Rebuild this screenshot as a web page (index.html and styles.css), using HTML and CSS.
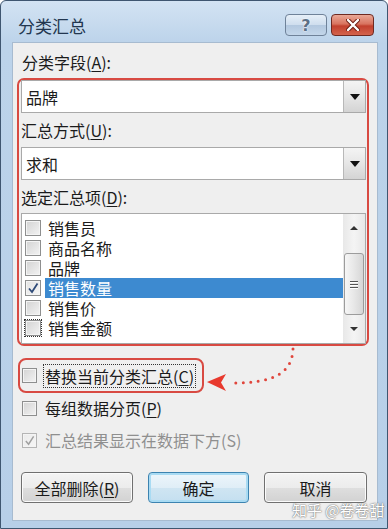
FILE: index.html
```html
<!DOCTYPE html>
<html lang="zh">
<head>
<meta charset="utf-8">
<title>分类汇总</title>
<link rel="stylesheet" href="styles.css">
</head>
<body>
<div class="window">
  <div class="titlebar">
    <span class="title">分类汇总</span>
    <div class="tbtns">
      <div class="tbtn help">?</div>
      <div class="tbtn close">
        <svg width="14" height="12" viewBox="0 0 14 12"><path d="M2 1 L12 11 M12 1 L2 11" stroke="#6a1a10" stroke-width="4.2" stroke-linecap="round"/><path d="M2 1 L12 11 M12 1 L2 11" stroke="#fff" stroke-width="2.4" stroke-linecap="round"/></svg>
      </div>
    </div>
  </div>
  <div class="client">
    <div class="label top">分类字段(<u>A</u>):</div>
    <div class="group">
      <div class="combo">
        <span class="ctext">品牌</span>
        <div class="drop"><span class="tri-down"></span></div>
      </div>
      <div class="label in">汇总方式(<u>U</u>):</div>
      <div class="combo">
        <span class="ctext">求和</span>
        <div class="drop"><span class="tri-down"></span></div>
      </div>
      <div class="label in">选定汇总项(<u>D</u>):</div>
      <div class="list">
        <div class="items">
          <div class="item"><span class="cb big"></span><span class="itext">销售员</span></div>
          <div class="item"><span class="cb big"></span><span class="itext">商品名称</span></div>
          <div class="item"><span class="cb big"></span><span class="itext">品牌</span></div>
          <div class="item"><span class="cb big checked"><svg width="12" height="12" viewBox="0 0 12 12"><path d="M2 6.5 L5 10 L10.5 1.5" fill="none" stroke="#2e4a78" stroke-width="1.8"/></svg></span><span class="itext sel">销售数量</span></div>
          <div class="item"><span class="cb big"></span><span class="itext">销售价</span></div>
          <div class="item"><span class="cb big focuscb"></span><span class="itext">销售金额</span></div>
        </div>
        <div class="scroll">
          <div class="sbtn"><span class="tri-up small"></span></div>
          <div class="thumb"><span class="grip"></span><span class="grip"></span><span class="grip"></span></div>
          <div class="sspace"></div>
          <div class="sbtn"><span class="tri-down small"></span></div>
        </div>
      </div>
    </div>
    <div class="opt first">
      <span class="cb"></span><span class="otext focus">替换当前分类汇总(<u>C</u>)</span>
    </div>
    <div class="opt second">
      <span class="cb"></span><span class="otext">每组数据分页(<u>P</u>)</span>
    </div>
    <div class="opt third dis">
      <span class="cb"><svg width="11" height="11" viewBox="0 0 12 12"><path d="M2 6.5 L5 10 L10.5 1.5" fill="none" stroke="#a0a0a0" stroke-width="1.6"/></svg></span><span class="otext">汇总结果显示在数据下方(S)</span>
    </div>
    <div class="buttons">
      <div class="btn b1">全部删除(<u>R</u>)</div>
      <div class="btn b2 default">确定</div>
      <div class="btn b3">取消</div>
    </div>
  </div>
  <svg class="arrow" width="388" height="529" viewBox="0 0 388 529">
    <path d="M293 349 C292 372 276 383 232 383" fill="none" stroke="#e0463c" stroke-width="3" stroke-linecap="round" stroke-dasharray="0 7.5"/>
    <path d="M207 382 L226 374 L221 382.5 L226 391 Z" fill="#e8392e"/>
  </svg>
  <div class="watermark">知乎 @卷卷甜</div>
</div>
</body>
</html>
```
FILE: styles.css
```css
* { box-sizing: border-box; }
html, body { margin: 0; padding: 0; background: #fff; }
body {
  font-family: "Noto Sans CJK SC", "Noto Sans", sans-serif;
  font-size: 16px;
  color: #1b1b1b;
}
u { text-decoration: underline; text-underline-offset: 2px; }

.window {
  position: relative;
  width: 388px;
  height: 529px;
  border: 1px solid #3f5670;
  border-radius: 6px 6px 0 0;
  background: linear-gradient(180deg, #d3e3f3 0, #bcd3ea 42px, #b7cfe8 100%);
  padding: 0 9px 7px 11px;
  display: flex;
  flex-direction: column;
}

.titlebar {
  height: 41px;
  display: flex;
  align-items: flex-start;
  justify-content: space-between;
}
.title {
  margin-top: 14px;
  margin-left: 6px;
  font-size: 17px;
  line-height: 22px;
  color: #22364f;
}
.tbtns {
  display: flex;
  gap: 4px;
  margin-top: 13px;
  margin-right: 4px;
}
.tbtn {
  height: 22px;
  border-radius: 4px;
  display: flex;
  align-items: center;
  justify-content: center;
}
.help {
  width: 42px;
  border: 1px solid #6f8299;
  background: linear-gradient(180deg, #e6eff8 0, #cfdeee 48%, #b3c8df 52%, #c3d6ea 100%);
  font-family: "DejaVu Sans", sans-serif;
  font-weight: bold;
  font-size: 16px;
  color: #5c7086;
  text-shadow: 0 0 2px #fff, 0 0 1px #fff;
}
.close {
  width: 43px;
  border: 1px solid #6e2a22;
  background: linear-gradient(180deg, #eaa897 0, #d8735f 45%, #c2402e 55%, #d3634c 100%);
}

.client {
  flex: 1;
  background: #efefef;
  border: 1px solid #a7bbd0;
  display: flex;
  flex-direction: column;
}

.label { line-height: 20px; }
.label.top {
  height: 35px;
  padding-top: 9px;
  padding-left: 9px;
}
.label.in {
  display: flex;
  align-items: center;
}
.group .label.in:nth-child(2) { height: 34px; }
.group .label.in:nth-child(4) { height: 33px; }

.group {
  margin: 0 8px 0 4px;
  border: 2px solid #d84a42;
  border-radius: 7px;
  padding: 0 1px 0 2px;
  display: flex;
  flex-direction: column;
}

.combo {
  height: 33px;
  background: #fff;
  border: 1px solid #a9a9a9;
  display: flex;
  align-items: stretch;
}
.ctext {
  flex: 1;
  display: flex;
  align-items: center;
  padding-left: 4px;
}
.drop {
  width: 22px;
  border-left: 1px solid #b8b8b8;
  background: linear-gradient(180deg, #f4f4f4 0, #e6e6e6 50%, #d4d4d4 100%);
  display: flex;
  align-items: center;
  justify-content: center;
}
.tri-down {
  width: 0;
  height: 0;
  border-left: 5px solid transparent;
  border-right: 5px solid transparent;
  border-top: 6px solid #111;
}
.tri-up {
  width: 0;
  height: 0;
  border-left: 5px solid transparent;
  border-right: 5px solid transparent;
  border-bottom: 6px solid #111;
}
.tri-up.small { border-left-width: 4px; border-right-width: 4px; border-bottom: 4px solid #333; }
.tri-down.small { border-left-width: 4px; border-right-width: 4px; border-top: 4px solid #333; }

.list {
  height: 131px;
  background: #fff;
  border: 1px solid #a9a9a9;
  display: flex;
}
.items {
  flex: 1;
  padding-top: 4px;
  padding-left: 2px;
  display: flex;
  flex-direction: column;
}
.item {
  height: 20px;
  display: flex;
  align-items: center;
}
.cb {
  flex: none;
  width: 15px;
  height: 15px;
  border: 1px solid #8e8f8f;
  background: linear-gradient(135deg, #d3d3d3 0, #e6e6e6 60%, #f3f3f3 100%);
  box-shadow: inset 0 0 0 1px #f4f4f4;
  display: flex;
  align-items: center;
  justify-content: center;
}
.cb.big { width: 16px; height: 16px; margin-left: 1px; }
.cb.checked { background: linear-gradient(135deg, #e4e4e4 0, #f4f4f4 100%); }
.cb.focuscb { outline: 1px dotted #333; outline-offset: 0; }
.itext {
  flex: 1;
  margin-left: 4px;
  padding-left: 3px;
  height: 20px;
  line-height: 20px;
}
.itext.sel {
  background: #3d8ad0;
  color: #fff;
}

.scroll {
  width: 22px;
  background: linear-gradient(90deg, #e8e8e8, #f4f4f4 50%, #e8e8e8);
  display: flex;
  flex-direction: column;
  align-items: center;
}
.sbtn {
  height: 28px;
  width: 100%;
  display: flex;
  align-items: center;
  justify-content: center;
}
.thumb {
  margin-top: 11px;
  width: 20px;
  height: 62px;
  border: 1px solid #9c9c9c;
  border-radius: 3px;
  background: linear-gradient(90deg, #f6f6f6 0, #e7e7e7 50%, #d6d6d6 100%);
  display: flex;
  flex-direction: column;
  align-items: center;
  justify-content: center;
  gap: 2px;
}
.grip {
  width: 8px;
  height: 1px;
  background: #555;
  box-shadow: 0 1px 0 #fff;
}
.sspace { flex: 1; }

.opt {
  display: flex;
  align-items: center;
  line-height: 20px;
}
.opt.first {
  margin-top: 12px;
  margin-left: 5px;
  width: 186px;
  height: 35px;
  border: 2px solid #d84a42;
  border-radius: 8px;
  padding-left: 2px;
}
.opt.second { margin-top: 5px; margin-left: 9px; height: 20px; }
.opt.third { margin-top: 12px; margin-left: 9px; height: 20px; }
.otext { margin-left: 8px; }
.otext.focus {
  margin-left: 6px;
  padding: 0 1px;
  border: 1px dotted #333;
  height: 24px;
  line-height: 22px;
}
.opt.dis .otext { color: #8f8f8f; }
.opt.dis .cb {
  border-color: #b5b5b5;
  background: linear-gradient(135deg, #ebebeb, #f6f6f6);
}

.buttons {
  margin-top: 22px;
  margin-left: 8px;
  display: flex;
  gap: 15px;
}
.btn {
  height: 31px;
  border: 1px solid #707070;
  border-radius: 4px;
  background: linear-gradient(180deg, #f4f4f4 0, #ececec 50%, #dedede 52%, #d2d2d2 100%);
  box-shadow: inset 0 0 0 1px #fbfbfb;
  display: flex;
  align-items: center;
  justify-content: center;
}
.b1 { width: 112px; }
.b2 { width: 101px; }
.b3 { width: 103px; }
.btn.default {
  border-color: #3c83b0;
  box-shadow: inset 0 0 0 2px #a9dbf3;
  background: linear-gradient(180deg, #edf6fb 0, #e0eef7 50%, #cfe5f2 52%, #c4dff0 100%);
}

.arrow {
  position: absolute;
  left: -1px;
  top: -1px;
  pointer-events: none;
}
.watermark {
  position: absolute;
  left: 291px;
  top: 499px;
  font-size: 15px;
  line-height: 20px;
  color: #fff;
  text-shadow: 0 0 2px #6f6f6f, 0 0 1px #6f6f6f;
}
```
